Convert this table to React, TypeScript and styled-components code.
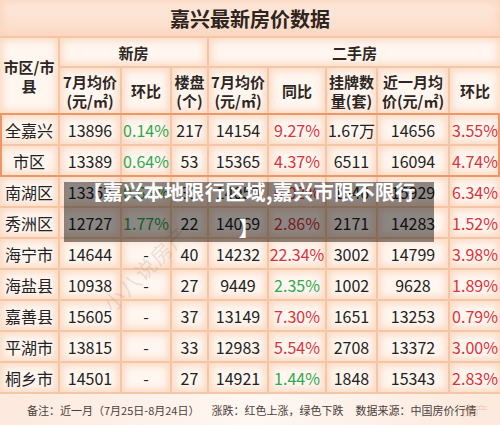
import React from 'react';
import styled, { createGlobalStyle } from 'styled-components';

type Tone = 'up' | 'down' | 'none';

interface Row {
  name: string;
  newPrice: string;
  newMom: string;
  newMomTone: Tone;
  projects: string;
  usedPrice: string;
  yoy: string;
  yoyTone: Tone;
  listings: string;
  monthPrice: string;
  mom: string;
  momTone: Tone;
}

const rows: Row[] = [
  { name: '全嘉兴', newPrice: '13896', newMom: '0.14%', newMomTone: 'down', projects: '217', usedPrice: '14154', yoy: '9.27%', yoyTone: 'up', listings: '1.67万', monthPrice: '14656', mom: '3.55%', momTone: 'up' },
  { name: '市区', newPrice: '13389', newMom: '0.64%', newMomTone: 'down', projects: '53', usedPrice: '15365', yoy: '4.37%', yoyTone: 'up', listings: '6511', monthPrice: '16094', mom: '4.74%', momTone: 'up' },
  { name: '南湖区', newPrice: '13352', newMom: '0.63%', newMomTone: 'down', projects: '31', usedPrice: '14059', yoy: '6.02%', yoyTone: 'up', listings: '1646', monthPrice: '15929', mom: '6.34%', momTone: 'up' },
  { name: '秀洲区', newPrice: '12727', newMom: '1.77%', newMomTone: 'down', projects: '22', usedPrice: '14069', yoy: '2.86%', yoyTone: 'up', listings: '2171', monthPrice: '14283', mom: '1.52%', momTone: 'up' },
  { name: '海宁市', newPrice: '14644', newMom: '-', newMomTone: 'none', projects: '40', usedPrice: '14232', yoy: '22.34%', yoyTone: 'up', listings: '3002', monthPrice: '14799', mom: '3.98%', momTone: 'up' },
  { name: '海盐县', newPrice: '10938', newMom: '-', newMomTone: 'none', projects: '27', usedPrice: '9449', yoy: '2.35%', yoyTone: 'down', listings: '1002', monthPrice: '9628', mom: '1.89%', momTone: 'up' },
  { name: '嘉善县', newPrice: '15605', newMom: '-', newMomTone: 'none', projects: '37', usedPrice: '13149', yoy: '7.30%', yoyTone: 'up', listings: '1651', monthPrice: '13253', mom: '0.79%', momTone: 'up' },
  { name: '平湖市', newPrice: '13815', newMom: '-', newMomTone: 'none', projects: '33', usedPrice: '12983', yoy: '5.54%', yoyTone: 'up', listings: '2708', monthPrice: '13372', mom: '3.00%', momTone: 'up' },
  { name: '桐乡市', newPrice: '14501', newMom: '-', newMomTone: 'none', projects: '27', usedPrice: '14921', yoy: '1.44%', yoyTone: 'down', listings: '1848', monthPrice: '15343', mom: '2.83%', momTone: 'up' },
];

const DataRow = ({ row }: { row: Row }) => (
  <RowGrid>
    <Cell>{row.name}</Cell>
    <Cell>{row.newPrice}</Cell>
    <Cell $tone={row.newMomTone}>{row.newMom}</Cell>
    <Cell>{row.projects}</Cell>
    <Cell>{row.usedPrice}</Cell>
    <Cell $tone={row.yoyTone}>{row.yoy}</Cell>
    <Cell>{row.listings}</Cell>
    <Cell>{row.monthPrice}</Cell>
    <Cell $tone={row.momTone}>{row.mom}</Cell>
  </RowGrid>
);

const App = () => {
  return (
    <>
      <GlobalStyle />
      <Page>
        <Table>
          <Title>嘉兴最新房价数据</Title>
          <HeaderGrid>
            <HeadCell $rowSpan={2}>市区/市县</HeadCell>
            <HeadCell $colSpan={3}>新房</HeadCell>
            <HeadCell $colSpan={5}>二手房</HeadCell>
            <HeadCell>7月均价<br />(元/㎡)</HeadCell>
            <HeadCell>环比</HeadCell>
            <HeadCell>楼盘<br />(个)</HeadCell>
            <HeadCell>7月均价<br />(元/㎡)</HeadCell>
            <HeadCell>同比</HeadCell>
            <HeadCell>挂牌数<br />量(套)</HeadCell>
            <HeadCell>近一月均<br />价(元/㎡)</HeadCell>
            <HeadCell>环比</HeadCell>
          </HeaderGrid>
          <Highlight>
            <DataRow row={rows[0]} />
            <DataRow row={rows[1]} />
          </Highlight>
          {rows.slice(2).map((row) => (
            <DataRow key={row.name} row={row} />
          ))}
          <Footer>
            <span>备注：近一月（7月25日-8月24日）</span>
            <span>涨跌：红色上涨，绿色下跌</span>
            <span>数据来源：中国房价行情</span>
          </Footer>
        </Table>

        <Watermark>小八说房产</Watermark>
        <CornerMark>房产</CornerMark>

        <Banner>
          <BannerText>
            【嘉兴本地限行区域,嘉兴市限不限行
            <br />】
          </BannerText>
        </Banner>
      </Page>
    </>
  );
};

const GlobalStyle = createGlobalStyle`
  html, body {
    margin: 0;
    padding: 0;
    background: #fbe2d2;
  }
  body {
    font-family: "Noto Sans CJK SC", "Noto Sans", sans-serif;
  }
`;

const Page = styled.div`
  position: relative;
  width: 500px;
  height: 425px;
  overflow: hidden;
`;

const Table = styled.div`
  display: flex;
  flex-direction: column;
  gap: 2px;
  width: 500px;
  background: #f5c6a5;
`;

const Title = styled.div`
  height: 36px;
  display: flex;
  align-items: center;
  justify-content: center;
  font-size: 20px;
  font-weight: 700;
  color: #2e2420;
  background: linear-gradient(180deg, #fde9dc 0%, #fcdcc8 100%);
  box-shadow: inset 0 0 8px 2px #fbd4bc;
`;

const columns = '58px 60px 48px 35px 58px 56px 49px 70px 50px';

const HeaderGrid = styled.div`
  display: grid;
  grid-template-columns: ${columns};
  grid-template-rows: 28px 45px;
  gap: 2px;
`;

const cellSurface = `
  background: #fff6f0;
  box-shadow: inset 0 0 7px 3px #fcdac4;
`;

const HeadCell = styled.div<{ $rowSpan?: number; $colSpan?: number }>`
  ${cellSurface}
  grid-row: span ${(p) => p.$rowSpan ?? 1};
  grid-column: span ${(p) => p.$colSpan ?? 1};
  display: flex;
  align-items: center;
  justify-content: center;
  text-align: center;
  font-size: 15px;
  font-weight: 700;
  line-height: 19px;
  color: #2e2622;
  padding: 0 2px;
`;

const RowGrid = styled.div`
  display: grid;
  grid-template-columns: ${columns};
  gap: 2px;
  height: 29px;
`;

const toneColor: Record<Tone, string> = {
  up: '#d9333b',
  down: '#2fa84f',
  none: '#222222',
};

const Cell = styled.div<{ $tone?: Tone }>`
  ${cellSurface}
  display: flex;
  align-items: center;
  justify-content: center;
  font-size: 16px;
  color: ${(p) => toneColor[p.$tone ?? 'none']};
  white-space: nowrap;
`;

const Highlight = styled.div`
  position: relative;
  display: flex;
  flex-direction: column;
  gap: 2px;

  &::after {
    content: '';
    position: absolute;
    inset: -2px 0;
    border: 2px solid #eb9866;
    pointer-events: none;
  }
`;

const Footer = styled.div`
  height: 31px;
  display: flex;
  align-items: center;
  gap: 12px;
  padding-left: 27px;
  font-size: 11px;
  color: #4a403b;
  background: linear-gradient(90deg, #fde9dd 0%, #fff7f2 50%, #fde9dd 100%);
`;

const Watermark = styled.div`
  position: absolute;
  left: 90px;
  top: 253px;
  transform: rotate(-45deg);
  font-size: 21px;
  letter-spacing: 1px;
  color: rgba(140, 130, 125, 0.2);
  pointer-events: none;
`;

const CornerMark = styled.div`
  position: absolute;
  left: 462px;
  top: 400px;
  font-size: 13px;
  color: rgba(200, 120, 100, 0.25);
  pointer-events: none;
`;

const Banner = styled.div`
  position: absolute;
  left: 64px;
  top: 182px;
  width: 370px;
  height: 60px;
  background: rgba(0, 0, 0, 0.45);
`;

const BannerText = styled.div`
  margin-top: -8px;
  text-align: center;
  font-size: 20px;
  font-weight: 700;
  line-height: 36px;
  letter-spacing: 0.4px;
  color: #ffffff;
  white-space: nowrap;
`;

export default App;
